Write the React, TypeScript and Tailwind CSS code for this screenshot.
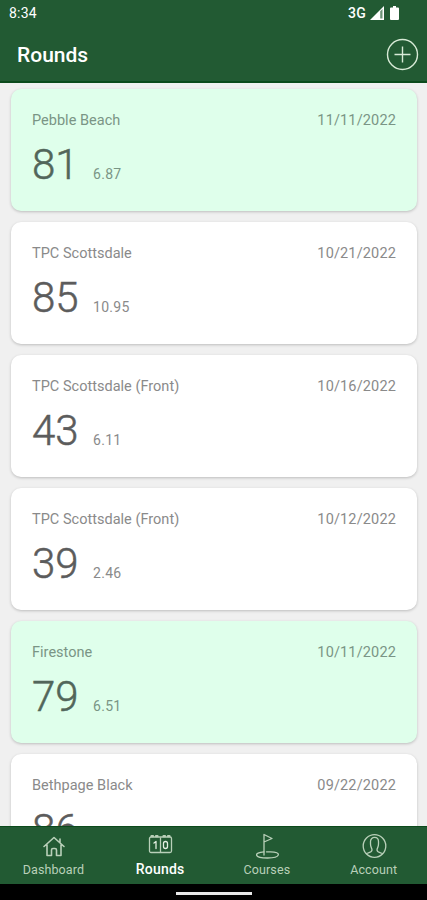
import type { ReactNode } from 'react';

type Round = { course: string; date: string; score: number; diff?: string; best?: boolean };

const rounds: Round[] = [
  { course: 'Pebble Beach', date: '11/11/2022', score: 81, diff: '6.87', best: true },
  { course: 'TPC Scottsdale', date: '10/21/2022', score: 85, diff: '10.95' },
  { course: 'TPC Scottsdale (Front)', date: '10/16/2022', score: 43, diff: '6.11' },
  { course: 'TPC Scottsdale (Front)', date: '10/12/2022', score: 39, diff: '2.46' },
  { course: 'Firestone', date: '10/11/2022', score: 79, diff: '6.51', best: true },
  { course: 'Bethpage Black', date: '09/22/2022', score: 86 },
];

function RoundCard({ course, date, score, diff, best }: Round) {
  return (
    <article
      className={`h-[122px] shrink-0 rounded-[10px] px-[21px] pt-[22px] shadow-[0_1px_3px_rgba(0,0,0,0.22)] ${
        best ? 'bg-[#dfffeb]' : 'bg-white'
      }`}
    >
      <div className={`flex justify-between text-[14.5px] leading-5 ${best ? 'text-[#7a9585]' : 'text-[#8a8a8a]'}`}>
        <span className="tracking-[0.02px]">{course}</span>
        <span className="tracking-[0.15px]">{date}</span>
      </div>
      <div className="mt-[9px] flex items-baseline">
        <span
          className={`w-[61px] text-[42px] leading-[50px] font-light [-webkit-text-stroke:0.5px_currentColor] ${
            best ? 'text-[#52665a]' : 'text-[#5c5c5c]'
          }`}
        >
          {score}
        </span>
        <span className={`text-[14px] tracking-[0.3px] ${best ? 'text-[#7a9585]' : 'text-[#8a8a8a]'}`}>{diff}</span>
      </div>
    </article>
  );
}

function Tab({ label, active, children }: { label: string; active?: boolean; children: ReactNode }) {
  return (
    <button className={`flex flex-1 flex-col items-center pt-[6px] ${active ? 'text-white' : 'text-[#b9d0b9]'}`}>
      <svg width="26" height="26" viewBox="0 0 26 26" fill="none" stroke="#b9d0b9" strokeWidth="1.3" strokeLinejoin="round" strokeLinecap="round">
        {children}
      </svg>
      <span className={active ? 'mt-[2px] text-[14px] leading-4 font-medium tracking-[0.2px]' : 'mt-[3px] text-[12.5px] leading-4 tracking-[0.1px]'}>
        {label}
      </span>
    </button>
  );
}

export default function App() {
  return (
    <div className="flex h-[900px] w-[427px] flex-col overflow-hidden bg-[#f0f0f0] font-[Roboto,sans-serif]">
      <header className="h-[83px] shrink-0 border-b-2 border-[#0c4a1c] bg-[#225a33] text-white">
        <div className="flex h-[26px] items-center pr-[28px] pl-[9px]">
          <span className="text-[14px] leading-4 tracking-[0.2px]">8:34</span>
          <span className="ml-auto text-[14px] leading-4 font-medium tracking-[0.2px]">3G</span>
          <svg className="ml-[4px]" width="15" height="14" viewBox="0 0 15 14">
            <path d="M14 0V14H0Z" fill="#fff" />
            <path d="M10.2 5.2L12.5 3V12.5H10.2Z" fill="#6c9477" />
          </svg>
          <svg className="ml-[5px]" width="9" height="14" viewBox="0 0 9 14">
            <path d="M3 0H6V1.5H8Q9 1.5 9 2.5V13Q9 14 8 14H1Q0 14 0 13V2.5Q0 1.5 1 1.5H3Z" fill="#fff" />
          </svg>
        </div>
        <div className="mt-[2px] flex h-[53px] items-center justify-between pr-[8px] pl-[17px]">
          <h1 className="text-[21px] leading-6 font-medium">Rounds</h1>
          <svg width="33" height="33" viewBox="0 0 33 33" fill="none" stroke="#d7ead6" strokeWidth="1.4">
            <circle cx="16.5" cy="16.5" r="15" />
            <path d="M16.5 8.5V24.5M8.5 16.5H24.5" />
          </svg>
        </div>
      </header>

      <main className="flex min-h-0 flex-1 flex-col gap-[11px] overflow-hidden pt-[6px] pr-[10px] pl-[11px]">
        {rounds.map((round) => (
          <RoundCard key={round.date} {...round} />
        ))}
      </main>

      <nav className="flex h-[58px] shrink-0 border-t border-[#0c4a1c] bg-[#225a33]">
        <Tab label="Dashboard">
          <path d="M4 13.5L14 4.5L24 13.5M20 6V9.5M7 12V22.5H11.5V17Q11.5 15.5 13 15.5H15Q16.5 15.5 16.5 17V22.5H21V12" strokeWidth="1.6" />
        </Tab>
        <Tab label="Rounds" active>
          <rect x="2.5" y="4" width="22" height="15.5" rx="1.5" />
          <path d="M4.5 3.2H10.5M16.5 3.2H22.5" strokeWidth="2.2" strokeDasharray="1.5 3" />
          <path d="M13.5 5V19" />
          <path d="M7 10L9 8.5V15.5" stroke="#e3eee1" />
          <rect x="16.5" y="8.5" width="4" height="7" rx="2" stroke="#e3eee1" />
        </Tab>
        <Tab label="Courses">
          <path d="M10 22V1.5L18 5.5L10 9" />
          <path d="M10 18.8C-1 19.5 0 25 13.5 25S28 18.8 16.5 18.8H12.5" />
        </Tab>
        <Tab label="Account">
          <circle cx="13.5" cy="13" r="11.3" />
          <path d="M5.5 20.5C7.5 19.5 11 19.5 11 17C11 15 9.5 14.5 9.5 11V8.5C9.5 3 17.5 3 17.5 8.5V11C17.5 14.5 16 15 16 17C16 19.5 19.5 19.5 21.5 20.5" />
        </Tab>
      </nav>
      <footer className="flex h-4 shrink-0 justify-center bg-black pt-2">
        <div className="h-[3px] w-[76px] bg-[#e8e8e8]" />
      </footer>
    </div>
  );
}
